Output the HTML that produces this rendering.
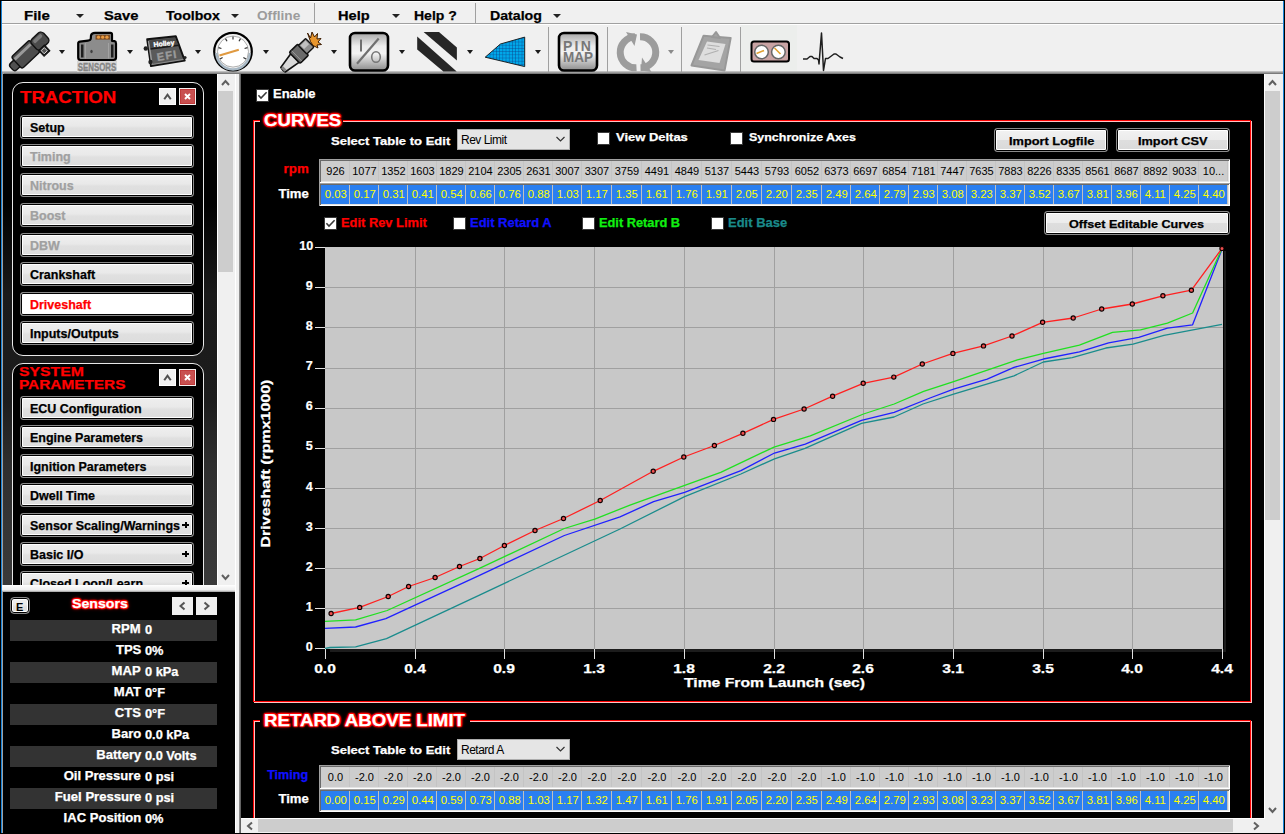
<!DOCTYPE html><html><head><meta charset='utf-8'><style>
*{box-sizing:border-box;margin:0;padding:0}
html,body{width:1285px;height:834px;overflow:hidden;background:#000;font-family:"Liberation Sans", sans-serif}
.a{position:absolute}
.t{position:absolute;white-space:nowrap;line-height:1}
.b{font-weight:bold}
.btn{position:absolute;border:1px solid #8a8a8a;border-radius:3px;background:linear-gradient(#f2f2f2 0%,#ececec 48%,#dedede 52%,#dadada 100%);box-shadow:inset 0 0 0 1px #000,inset 0 0 0 2px #fff}
.sbtn{position:absolute;border:1px solid #8a8a8a;border-radius:3px;background:linear-gradient(#efefef 0%,#e9e9e9 45%,#e0e0e0 55%,#dcdcdc 100%);box-shadow:inset 0 0 0 1px #000,inset 0 0 0 2px #fff}
.cb{position:absolute;width:12px;height:12px;background:#fff;border:1px solid #333}
</style></head><body>
<div class='a' style='left:1px;top:1px;width:1283px;height:72px;background:#f0f0f0'></div>
<div class='a' style='left:2px;top:1px;width:1281px;height:1px;background:#fff'></div>
<div class='a' style='left:2px;top:23px;width:1281px;height:1px;background:#a0a0a0'></div>
<div class='a' style='left:2px;top:24px;width:1281px;height:1px;background:#fff'></div>
<div class='a' style='left:2px;top:71px;width:1281px;height:3px;background:linear-gradient(#d0d0d0,#6a6a6a)'></div>
<div class='a' style='left:1px;top:1px;width:1px;height:832px;background:#1883d7'></div>
<div class='a' style='left:1283px;top:1px;width:1px;height:832px;background:#1883d7'></div>
<div class='t b' style='left:24px;top:9px;font-size:13px;color:#000;transform:scaleX(1.155);transform-origin:left top;-webkit-text-stroke:0.25px #000;'>File</div>
<div class='a' style='left:75.5px;top:13.7px;width:0;height:0;border-left:4.0px solid transparent;border-right:4.0px solid transparent;border-top:4px solid #222'></div>
<div class='t b' style='left:103.5px;top:9px;font-size:13px;color:#000;transform:scaleX(1.1321);transform-origin:left top;-webkit-text-stroke:0.25px #000;'>Save</div>
<div class='t b' style='left:166px;top:9px;font-size:13px;color:#000;transform:scaleX(1.0854);transform-origin:left top;-webkit-text-stroke:0.25px #000;'>Toolbox</div>
<div class='a' style='left:230.5px;top:13.7px;width:0;height:0;border-left:4.0px solid transparent;border-right:4.0px solid transparent;border-top:4px solid #222'></div>
<div class='t b' style='left:257px;top:9px;font-size:13px;color:#9c9c9c;transform:scaleX(1.05);transform-origin:left top;'>Offline</div>
<div class='a' style='left:314px;top:3px;width:1px;height:20px;background:#a0a0a0'></div>
<div class='t b' style='left:338.3px;top:9px;font-size:13px;color:#000;transform:scaleX(1.1231);transform-origin:left top;-webkit-text-stroke:0.25px #000;'>Help</div>
<div class='a' style='left:391.5px;top:13.7px;width:0;height:0;border-left:4.0px solid transparent;border-right:4.0px solid transparent;border-top:4px solid #222'></div>
<div class='t b' style='left:413.5px;top:9px;font-size:13px;color:#000;transform:scaleX(1.0784);transform-origin:left top;-webkit-text-stroke:0.25px #000;'>Help ?</div>
<div class='a' style='left:475px;top:3px;width:1px;height:20px;background:#a0a0a0'></div>
<div class='t b' style='left:489.5px;top:9px;font-size:13px;color:#000;transform:scaleX(1.0889);transform-origin:left top;-webkit-text-stroke:0.25px #000;'>Datalog</div>
<div class='a' style='left:552.5px;top:13.7px;width:0;height:0;border-left:4.0px solid transparent;border-right:4.0px solid transparent;border-top:4px solid #222'></div>
<div class='a' style='left:59.0px;top:50.0px;width:0;height:0;border-left:3.5px solid transparent;border-right:3.5px solid transparent;border-top:4px solid #1a1a1a'></div>
<div class='a' style='left:127.0px;top:50.0px;width:0;height:0;border-left:3.5px solid transparent;border-right:3.5px solid transparent;border-top:4px solid #1a1a1a'></div>
<div class='a' style='left:195.0px;top:50.0px;width:0;height:0;border-left:3.5px solid transparent;border-right:3.5px solid transparent;border-top:4px solid #1a1a1a'></div>
<div class='a' style='left:263.0px;top:50.0px;width:0;height:0;border-left:3.5px solid transparent;border-right:3.5px solid transparent;border-top:4px solid #1a1a1a'></div>
<div class='a' style='left:331.0px;top:50.0px;width:0;height:0;border-left:3.5px solid transparent;border-right:3.5px solid transparent;border-top:4px solid #1a1a1a'></div>
<div class='a' style='left:399.0px;top:50.0px;width:0;height:0;border-left:3.5px solid transparent;border-right:3.5px solid transparent;border-top:4px solid #1a1a1a'></div>
<div class='a' style='left:467.0px;top:50.0px;width:0;height:0;border-left:3.5px solid transparent;border-right:3.5px solid transparent;border-top:4px solid #1a1a1a'></div>
<div class='a' style='left:535.0px;top:50.0px;width:0;height:0;border-left:3.5px solid transparent;border-right:3.5px solid transparent;border-top:4px solid #1a1a1a'></div>
<div class='a' style='left:668.3px;top:50.0px;width:0;height:0;border-left:3.5px solid transparent;border-right:3.5px solid transparent;border-top:4px solid #8a8a8a'></div>
<div class='a' style='left:548px;top:27px;width:1px;height:45px;background:#a0a0a0'></div>
<div class='a' style='left:607px;top:27px;width:1px;height:45px;background:#a0a0a0'></div>
<div class='a' style='left:681px;top:27px;width:1px;height:45px;background:#a0a0a0'></div>
<div class='a' style='left:740px;top:27px;width:1px;height:45px;background:#a0a0a0'></div>
<div class='a' style='left:741px;top:25px;width:56px;height:46px;background:#eceeec'></div>
<svg class='a' style='left:0;top:0' width='1285' height='74'>
<defs>
<linearGradient id='gbox' x1='0' y1='0' x2='0' y2='1'><stop offset='0' stop-color='#a8a8a8'/><stop offset='0.35' stop-color='#ececec'/><stop offset='0.55' stop-color='#f2f2f2'/><stop offset='1' stop-color='#8c8c8c'/></linearGradient>
<linearGradient id='gbody' x1='0' y1='0' x2='0' y2='1'><stop offset='0' stop-color='#9a9a9a'/><stop offset='0.3' stop-color='#5a5a5a'/><stop offset='1' stop-color='#3a3a3a'/></linearGradient>
<pattern id='grid' width='3.2' height='3.2' patternUnits='userSpaceOnUse'><rect width='3.2' height='3.2' fill='#00a8ea'/><path d='M0 0H3.2M0 0V3.2' stroke='#0a4a90' stroke-width='0.9'/></pattern>
</defs>
<g transform='translate(29,52) rotate(-43.3)'>
<rect x='-24' y='-4.5' width='10' height='9' rx='3' fill='#505050' stroke='#111' stroke-width='1.4'/>
<rect x='-16.5' y='-8.5' width='25' height='16' rx='2.5' fill='#4c4c4c' stroke='#111' stroke-width='1.4'/>
<rect x='-15.5' y='-6' width='22' height='3' fill='#9a9a9a'/>
<rect x='7.5' y='-7.5' width='16' height='14' rx='4' fill='#4a4a4a' stroke='#111' stroke-width='1.4'/>
<rect x='10' y='-5.5' width='11' height='3.5' rx='1.5' fill='#7a7a7a'/>
<rect x='8' y='5.5' width='8' height='8' fill='#1a1a1a' stroke='#111' stroke-width='1'/>
<rect x='9.8' y='7.3' width='4.4' height='4.4' fill='#555' stroke='#e0e0e0' stroke-width='0.9'/>
</g>
<rect x='77' y='60.5' width='40' height='11.5' fill='#d6d6d6'/>
<text x='97' y='71.3' font-family='Liberation Sans' font-weight='bold' font-size='10.5' fill='#858585' stroke='#858585' stroke-width='0.35' text-anchor='middle' textLength='38.5' lengthAdjust='spacingAndGlyphs'>SENSORS</text>
<path d='M78.2 43.5 Q78.2 41.8 80 41.6 L88 40.6 Q90.6 40.4 90.8 38.5 L91 35.5 Q91.5 32.8 95 32.8 L110.5 32.8 Q112 32.8 112 34.5 L112 40.8 L114.5 41.2 Q116 41.5 116 43.5 L116 57.5 Q116 60 113.5 60 L80.5 60 Q78.2 60 78.2 57.5 Z' fill='#8c8c8c' stroke='#000' stroke-width='2.2' stroke-linejoin='round'/>
<rect x='95.5' y='34.8' width='14.5' height='4.8' fill='#7a4a20'/>
<circle cx='98.5' cy='37.2' r='1.6' fill='#e89a40'/><circle cx='102.7' cy='37.2' r='1.6' fill='#e89a40'/><circle cx='106.9' cy='37.2' r='1.6' fill='#e89a40'/>
<rect x='81' y='44.5' width='2.5' height='13' fill='#1e1e1e'/><rect x='111' y='44.5' width='2.5' height='13' fill='#1e1e1e'/>
<line x1='85.5' y1='43' x2='85.5' y2='58.5' stroke='#a8a8a8' stroke-width='0.8'/><line x1='108.5' y1='43' x2='108.5' y2='58.5' stroke='#a8a8a8' stroke-width='0.8'/>
<ellipse cx='91.5' cy='51.5' rx='1.2' ry='1.8' fill='#404040'/>
<path d='M147.2 39.3 L175.8 36.3 L184.7 60.5 L151 66 Z' fill='#5a5a5a' stroke='#111' stroke-width='2' stroke-linejoin='round'/>
<path d='M148.6 41 L152 64.5' stroke='#9a9a9a' stroke-width='1.6'/>
<path d='M149 40.5 L175 37.8 L178.5 45 L150.5 48.5 Z' fill='#484848'/>
<path d='M150.5 49 L179 45.3' stroke='#1a1a1a' stroke-width='1.6'/>
<text x='164' y='46' font-family='Liberation Sans' font-weight='bold' font-size='7' fill='#fff' stroke='#fff' stroke-width='0.3' transform='rotate(-6 164 45)' text-anchor='middle'>Holley</text>
<text x='167' y='59.5' font-family='Liberation Sans' font-weight='bold' font-size='11' fill='#9a9a9a' stroke='#9a9a9a' stroke-width='0.4' transform='rotate(-9 166 55)' text-anchor='middle' letter-spacing='1.2'>EFI</text>
<path d='M152 64.5 L183.5 59.3' stroke='#8a8a8a' stroke-width='1.2'/>
<circle cx='145.8' cy='48.5' r='2.2' fill='#222'/><circle cx='150.5' cy='62' r='2.2' fill='#222'/><circle cx='185' cy='57.5' r='1.6' fill='#222'/>
<circle cx='233' cy='51.6' r='18.8' fill='#f4f4f4' stroke='#000' stroke-width='2.2'/>
<path d='M216.5 53 A16.5 16.5 0 0 0 249.5 53' fill='none' stroke='#a8b8c4' stroke-width='2.5'/>
<circle cx='233' cy='51.6' r='15.5' fill='#fff' stroke='#999' stroke-width='0.8'/>
<line x1='220.0' y1='59.1' x2='222.6' y2='57.6' stroke='#333' stroke-width='1.2'/><line x1='218.5' y1='47.7' x2='221.4' y2='48.5' stroke='#333' stroke-width='1.2'/><line x1='225.5' y1='38.6' x2='227.0' y2='41.2' stroke='#333' stroke-width='1.2'/><line x1='233.0' y1='36.6' x2='233.0' y2='39.6' stroke='#333' stroke-width='1.2'/><line x1='240.5' y1='38.6' x2='239.0' y2='41.2' stroke='#333' stroke-width='1.2'/><line x1='247.5' y1='47.7' x2='244.6' y2='48.5' stroke='#333' stroke-width='1.2'/><line x1='246.0' y1='59.1' x2='243.4' y2='57.6' stroke='#333' stroke-width='1.2'/>
<line x1='219.5' y1='55.5' x2='238.8' y2='49.8' stroke='#e09a40' stroke-width='2.2'/>
<g transform='translate(298,55) rotate(-44.5)'>
<path d='M-21 -3.2 Q-22 0 -21 3.2 L-4 6 L-4 -6 Z' fill='#dadada' stroke='#111' stroke-width='1.6' stroke-linejoin='round'/>
<rect x='-21.5' y='-2.5' width='3' height='5' fill='#888'/>
<rect x='-4.5' y='-8' width='12' height='15.5' rx='1.5' fill='#6a6a6a' stroke='#111' stroke-width='1.6'/>
<line x1='-1.5' y1='-7.5' x2='-1.5' y2='7' stroke='#a0a0a0' stroke-width='0.8'/>
<rect x='7' y='-6.5' width='10' height='12' rx='1' fill='#8e8e8e' stroke='#111' stroke-width='1.4'/>
<rect x='8.5' y='-5' width='7' height='5' fill='#c0c0c0'/>
</g>
<path d='M307.5 33 L310.5 38 L312 32 L314.5 37 L317.5 33.5 L317 39 L321 38.5 L318 42 L321.5 44.5 L317 45 L318 48 L313 45.5 L310.5 41.5 Z' fill='#e8962e' stroke='#3a1a00' stroke-width='1' stroke-linejoin='round'/>
<rect x='350' y='33' width='38' height='37.5' rx='5' fill='url(#gbox)' stroke='#000' stroke-width='2.6'/>
<rect x='360' y='39.5' width='2' height='12' fill='#707070'/>
<line x1='357' y1='63.8' x2='378.7' y2='38.5' stroke='#707070' stroke-width='2.2'/>
<ellipse cx='376' cy='57' rx='4.3' ry='5.3' fill='none' stroke='#777' stroke-width='1.6'/>
<path d='M423.6 32.1 L439 32.1 L456.9 47.6 L456.9 60.5 Z' fill='#262626'/>
<path d='M417.2 36.5 L417.2 49.5 L443.4 71.5 L456.7 71.5 Z' fill='#262626'/>
<path d='M485.2 57.2 L500.4 44 L524.7 37.1 L524.7 66.6 Z' fill='url(#grid)' stroke='#111' stroke-width='0.9' stroke-linejoin='round'/>
<rect x='559' y='33' width='38' height='37.5' rx='5' fill='url(#gbox)' stroke='#000' stroke-width='2.6'/>
<text x='578' y='50.5' font-family='Liberation Sans' font-weight='bold' font-size='14' fill='#777' text-anchor='middle' letter-spacing='2.2'>PIN</text>
<text x='578' y='62' font-family='Liberation Sans' font-weight='bold' font-size='14' fill='#777' text-anchor='middle' textLength='30' lengthAdjust='spacingAndGlyphs'>MAP</text>
<path d='M636.5 67.8 A15.5 15.5 0 0 1 635 36.8' fill='none' stroke='#9c9c9c' stroke-width='7'/>
<path d='M640 36.8 A15.5 15.5 0 0 1 640.5 67.8' fill='none' stroke='#9c9c9c' stroke-width='7'/>
<path d='M626 32 L637 34.5 L634.5 46 Z' fill='#9c9c9c'/>
<path d='M642 57.5 L641 70.5 L651.5 72 Z' fill='#9c9c9c'/>
<path d='M703.6 35.7 L730.7 37.9 L724.6 70.4 L691.5 65.5 Z' fill='#a4a4a4' stroke='#989898' stroke-width='2' stroke-linejoin='round'/>
<path d='M712 37 L716 32 L720 38 Z' fill='#a4a4a4' stroke='#989898' stroke-width='2' stroke-linejoin='round'/>
<path d='M707 41.5 L725.5 44 L719.5 63 L698.5 60 Z' fill='#dedede'/>
<path d='M707.5 45 L719.5 46.5 M707 48 L716 49.5 M704.5 55 L718.5 50.5' stroke='#b0b0b0' stroke-width='1.2'/>
<rect x='751.5' y='41.5' width='37.5' height='20' rx='2.5' fill='#c9a3a3' stroke='#000' stroke-width='2'/>
<circle cx='761.5' cy='52' r='6.8' fill='#fff' stroke='#666' stroke-width='1.5'/>
<circle cx='778.4' cy='52' r='6.8' fill='#fff' stroke='#666' stroke-width='1.5'/>
<line x1='756.5' y1='53.5' x2='764' y2='50.5' stroke='#e0a030' stroke-width='1.6'/>
<line x1='774.5' y1='48' x2='780.5' y2='54' stroke='#e0a030' stroke-width='1.6'/>
<polyline points='803,59 807,59 810,56.5 812,56.5 814,58.5 817,58.5 818.5,60 819,64 821.5,33 823.5,70.5 825.5,58.5 828,58.5 834,54 836,54 840,57 843,58.5' fill='none' stroke='#1e1e1e' stroke-width='1.5' stroke-linejoin='round'/>
</svg>
<div class='a' style='left:2px;top:73px;width:2px;height:760px;background:#a0a0a0'></div>
<div class='a' style='left:3px;top:74px;width:214px;height:511px;background:linear-gradient(#000 0px,#000 130px,#1a1a1a 220px,#1c1c1c 326px,#2e2e2e 390px,#353535 450px,#3a3a3a 511px)'></div>
<div class='a' style='left:217px;top:74px;width:1px;height:511px;background:#fff'></div>
<div class='a' style='left:218px;top:74px;width:17px;height:511px;background:#f0f0f0'></div>
<div class='a' style='left:218px;top:91px;width:15px;height:181px;background:#cdcdcd'></div>
<div class='a' style='left:235px;top:74px;width:1px;height:759px;background:#fff'></div>
<div class='a' style='left:236px;top:74px;width:3px;height:759px;background:#f0f0f0'></div>
<div class='a' style='left:239px;top:74px;width:2px;height:759px;background:linear-gradient(90deg,#a0a0a0,#505050)'></div>
<svg class='a' style='left:0;top:0' width='1285' height='834'><polyline points='222.0,85.0 225.5,81.0 229.0,85.0' fill='none' stroke='#606060' stroke-width='2'/><polyline points='222.0,575.0 225.5,579.0 229.0,575.0' fill='none' stroke='#606060' stroke-width='2'/></svg>
<div class='a' style='left:12px;top:82px;width:192px;height:274px;border:1px solid #e8e8e8;border-radius:11px;background:#000'></div>
<div class='a' style='left:12px;top:363px;width:192px;height:240px;border:1px solid #e8e8e8;border-radius:11px;background:#000'></div>
<div class='t b' style='left:20.4px;top:89px;font-size:17px;color:#ff0000;transform:scaleX(1.0965);transform-origin:left top;-webkit-text-stroke:0.25px #ff0000;'>TRACTION</div>
<div class='t b' style='left:18.8px;top:365px;font-size:13px;color:#ff0000;transform:scaleX(1.2118);transform-origin:left top;-webkit-text-stroke:0.25px #ff0000;'>SYSTEM</div>
<div class='t b' style='left:18.8px;top:378px;font-size:13px;color:#ff0000;transform:scaleX(1.1818);transform-origin:left top;-webkit-text-stroke:0.25px #ff0000;'>PARAMETERS</div>
<div class='a' style='left:159px;top:88px;width:17px;height:17px;background:#f0f0f0;border:1px solid #fff'></div>
<div class='a' style='left:179px;top:88px;width:17px;height:17px;background:#c85050;border:1px solid #f4f0f0;box-shadow:inset 0 0 0 1px #c03a3a'></div>
<svg class='a' style='left:0;top:0' width='240' height='834'><polyline points='164.25,99.25 167.5,94.75 170.75,99.25' fill='none' stroke='#505050' stroke-width='2'/><path d='M185 94 L190 99 M190 94 L185 99' stroke='#fff' stroke-width='1.9'/></svg>
<div class='a' style='left:159px;top:369px;width:17px;height:17px;background:#f0f0f0;border:1px solid #fff'></div>
<div class='a' style='left:179px;top:369px;width:17px;height:17px;background:#c85050;border:1px solid #f4f0f0;box-shadow:inset 0 0 0 1px #c03a3a'></div>
<svg class='a' style='left:0;top:0' width='240' height='834'><polyline points='164.25,380.25 167.5,375.75 170.75,380.25' fill='none' stroke='#505050' stroke-width='2'/><path d='M185 375 L190 380 M190 375 L185 380' stroke='#fff' stroke-width='1.9'/></svg>
<div class='sbtn' style='left:20px;top:115px;width:174px;height:24px'></div>
<div class='t b' style='left:29.6px;top:122px;font-size:12px;color:#000;transform:scaleX(1.04);transform-origin:left top;-webkit-text-stroke:0.25px #000;'>Setup</div>
<div class='sbtn' style='left:20px;top:144px;width:174px;height:24px'></div>
<div class='t b' style='left:29.6px;top:151px;font-size:12px;color:#a0a0a0;transform:scaleX(1.04);transform-origin:left top;-webkit-text-stroke:0.25px #a0a0a0;'>Timing</div>
<div class='sbtn' style='left:20px;top:173px;width:174px;height:24px'></div>
<div class='t b' style='left:29.6px;top:180px;font-size:12px;color:#a0a0a0;transform:scaleX(1.04);transform-origin:left top;-webkit-text-stroke:0.25px #a0a0a0;'>Nitrous</div>
<div class='sbtn' style='left:20px;top:203px;width:174px;height:24px'></div>
<div class='t b' style='left:29.6px;top:210px;font-size:12px;color:#a0a0a0;transform:scaleX(1.04);transform-origin:left top;-webkit-text-stroke:0.25px #a0a0a0;'>Boost</div>
<div class='sbtn' style='left:20px;top:233px;width:174px;height:24px'></div>
<div class='t b' style='left:29.6px;top:240px;font-size:12px;color:#a0a0a0;transform:scaleX(1.04);transform-origin:left top;-webkit-text-stroke:0.25px #a0a0a0;'>DBW</div>
<div class='sbtn' style='left:20px;top:262px;width:174px;height:24px'></div>
<div class='t b' style='left:29.6px;top:269px;font-size:12px;color:#000;transform:scaleX(1.04);transform-origin:left top;-webkit-text-stroke:0.25px #000;'>Crankshaft</div>
<div class='sbtn' style='left:20px;top:292px;width:174px;height:24px;background:#fff'></div>
<div class='t b' style='left:29.6px;top:299px;font-size:12px;color:#ff0000;transform:scaleX(1.04);transform-origin:left top;-webkit-text-stroke:0.25px #ff0000;'>Driveshaft</div>
<div class='sbtn' style='left:20px;top:321px;width:174px;height:24px'></div>
<div class='t b' style='left:29.6px;top:328px;font-size:12px;color:#000;transform:scaleX(1.04);transform-origin:left top;-webkit-text-stroke:0.25px #000;'>Inputs/Outputs</div>
<div class='a' style='left:0;top:74px;width:217px;height:511px;overflow:hidden'><div class='a' style='left:0;top:-74px;width:217px;height:834px'>
<div class='sbtn' style='left:20px;top:396px;width:174px;height:24px'></div>
<div class='t b' style='left:29.6px;top:403px;font-size:12px;color:#000;transform:scaleX(1.04);transform-origin:left top;-webkit-text-stroke:0.25px #000;'>ECU Configuration</div>
<div class='sbtn' style='left:20px;top:425px;width:174px;height:24px'></div>
<div class='t b' style='left:29.6px;top:432px;font-size:12px;color:#000;transform:scaleX(1.04);transform-origin:left top;-webkit-text-stroke:0.25px #000;'>Engine Parameters</div>
<div class='sbtn' style='left:20px;top:454px;width:174px;height:24px'></div>
<div class='t b' style='left:29.6px;top:461px;font-size:12px;color:#000;transform:scaleX(1.04);transform-origin:left top;-webkit-text-stroke:0.25px #000;'>Ignition Parameters</div>
<div class='sbtn' style='left:20px;top:483px;width:174px;height:24px'></div>
<div class='t b' style='left:29.6px;top:490px;font-size:12px;color:#000;transform:scaleX(1.04);transform-origin:left top;-webkit-text-stroke:0.25px #000;'>Dwell Time</div>
<div class='sbtn' style='left:20px;top:513px;width:174px;height:24px'></div>
<div class='t b' style='left:29.6px;top:520px;font-size:12px;color:#000;transform:scaleX(1.04);transform-origin:left top;-webkit-text-stroke:0.25px #000;'>Sensor Scaling/Warnings</div>
<div class='a' style='left:182px;top:524px;width:7px;height:2px;background:#000'></div><div class='a' style='left:184.5px;top:522px;width:2px;height:6px;background:#000'></div>
<div class='sbtn' style='left:20px;top:542px;width:174px;height:24px'></div>
<div class='t b' style='left:29.6px;top:549px;font-size:12px;color:#000;transform:scaleX(1.04);transform-origin:left top;-webkit-text-stroke:0.25px #000;'>Basic I/O</div>
<div class='a' style='left:182px;top:553px;width:7px;height:2px;background:#000'></div><div class='a' style='left:184.5px;top:551px;width:2px;height:6px;background:#000'></div>
<div class='sbtn' style='left:20px;top:571px;width:174px;height:24px'></div>
<div class='t b' style='left:29.6px;top:578px;font-size:12px;color:#000;transform:scaleX(1.04);transform-origin:left top;-webkit-text-stroke:0.25px #000;'>Closed Loop/Learn</div>
<div class='a' style='left:182px;top:582px;width:7px;height:2px;background:#000'></div><div class='a' style='left:184.5px;top:580px;width:2px;height:6px;background:#000'></div>
</div></div>
<div class='a' style='left:2px;top:585px;width:233px;height:7px;background:linear-gradient(#fff 0,#f4f4f4 3px,#f0f0f0 5px,#9a9a9a 7px)'></div>
<div class='a' style='left:3px;top:592px;width:232px;height:241px;background:#000'></div>
<div class='sbtn' style='left:10px;top:597px;width:20px;height:17px;border-radius:4px'></div>
<div class='t b' style='left:16px;top:602px;font-size:11px;color:#000'>E</div>
<div class='t b' style='left:72px;top:597px;font-size:13px;color:#fff;transform:scaleX(1.088);transform-origin:left top;-webkit-text-stroke:0.25px #fff;text-shadow:1px 0 1px #f00,-1px 0 1px #f00,0 1px 1px #f00,0 -1px 1px #f00,1px 1px 1px #f00,-1px -1px 1px #f00,1px -1px 1px #f00,-1px 1px 1px #f00,0 0 3px #f00,0 0 4px #d00'>Sensors</div>
<div class='a' style='left:172px;top:597px;width:21px;height:18px;background:#f0f0f0'></div>
<div class='a' style='left:196px;top:597px;width:21px;height:18px;background:#f0f0f0'></div>
<svg class='a' style='left:0;top:0' width='240' height='834'><polyline points='184.5,602.5 180.5,606 184.5,609.5' fill='none' stroke='#555' stroke-width='2'/><polyline points='204.5,602.5 208.5,606 204.5,609.5' fill='none' stroke='#555' stroke-width='2'/></svg>
<div class='a' style='left:10px;top:620px;width:207px;height:21px;background:#333'></div>
<div class='t b' style='right:1144px;top:623px;font-size:12px;color:#fff;transform:scaleX(1.09);transform-origin:right top;-webkit-text-stroke:0.25px #fff;'>RPM</div>
<div class='t b' style='left:145px;top:624px;font-size:12px;color:#fff;transform:scaleX(1.065);transform-origin:left top;-webkit-text-stroke:0.25px #fff;'>0</div>
<div class='t b' style='right:1144px;top:644px;font-size:12px;color:#fff;transform:scaleX(1.09);transform-origin:right top;-webkit-text-stroke:0.25px #fff;'>TPS</div>
<div class='t b' style='left:145px;top:645px;font-size:12px;color:#fff;transform:scaleX(1.065);transform-origin:left top;-webkit-text-stroke:0.25px #fff;'>0%</div>
<div class='a' style='left:10px;top:662px;width:207px;height:21px;background:#333'></div>
<div class='t b' style='right:1144px;top:665px;font-size:12px;color:#fff;transform:scaleX(1.09);transform-origin:right top;-webkit-text-stroke:0.25px #fff;'>MAP</div>
<div class='t b' style='left:145px;top:666px;font-size:12px;color:#fff;transform:scaleX(1.065);transform-origin:left top;-webkit-text-stroke:0.25px #fff;'>0 kPa</div>
<div class='t b' style='right:1144px;top:686px;font-size:12px;color:#fff;transform:scaleX(1.09);transform-origin:right top;-webkit-text-stroke:0.25px #fff;'>MAT</div>
<div class='t b' style='left:145px;top:687px;font-size:12px;color:#fff;transform:scaleX(1.065);transform-origin:left top;-webkit-text-stroke:0.25px #fff;'>0°F</div>
<div class='a' style='left:10px;top:704px;width:207px;height:21px;background:#333'></div>
<div class='t b' style='right:1144px;top:707px;font-size:12px;color:#fff;transform:scaleX(1.09);transform-origin:right top;-webkit-text-stroke:0.25px #fff;'>CTS</div>
<div class='t b' style='left:145px;top:708px;font-size:12px;color:#fff;transform:scaleX(1.065);transform-origin:left top;-webkit-text-stroke:0.25px #fff;'>0°F</div>
<div class='t b' style='right:1144px;top:728px;font-size:12px;color:#fff;transform:scaleX(1.09);transform-origin:right top;-webkit-text-stroke:0.25px #fff;'>Baro</div>
<div class='t b' style='left:145px;top:729px;font-size:12px;color:#fff;transform:scaleX(1.065);transform-origin:left top;-webkit-text-stroke:0.25px #fff;'>0.0 kPa</div>
<div class='a' style='left:10px;top:746px;width:207px;height:21px;background:#333'></div>
<div class='t b' style='right:1144px;top:749px;font-size:12px;color:#fff;transform:scaleX(1.09);transform-origin:right top;-webkit-text-stroke:0.25px #fff;'>Battery</div>
<div class='t b' style='left:145px;top:750px;font-size:12px;color:#fff;transform:scaleX(1.065);transform-origin:left top;-webkit-text-stroke:0.25px #fff;'>0.0 Volts</div>
<div class='t b' style='right:1144px;top:770px;font-size:12px;color:#fff;transform:scaleX(1.09);transform-origin:right top;-webkit-text-stroke:0.25px #fff;'>Oil Pressure</div>
<div class='t b' style='left:145px;top:771px;font-size:12px;color:#fff;transform:scaleX(1.065);transform-origin:left top;-webkit-text-stroke:0.25px #fff;'>0 psi</div>
<div class='a' style='left:10px;top:788px;width:207px;height:21px;background:#333'></div>
<div class='t b' style='right:1144px;top:791px;font-size:12px;color:#fff;transform:scaleX(1.09);transform-origin:right top;-webkit-text-stroke:0.25px #fff;'>Fuel Pressure</div>
<div class='t b' style='left:145px;top:792px;font-size:12px;color:#fff;transform:scaleX(1.065);transform-origin:left top;-webkit-text-stroke:0.25px #fff;'>0 psi</div>
<div class='t b' style='right:1144px;top:812px;font-size:12px;color:#fff;transform:scaleX(1.09);transform-origin:right top;-webkit-text-stroke:0.25px #fff;'>IAC Position</div>
<div class='t b' style='left:145px;top:813px;font-size:12px;color:#fff;transform:scaleX(1.065);transform-origin:left top;-webkit-text-stroke:0.25px #fff;'>0%</div>
<div class='a' style='left:1264px;top:74px;width:1px;height:745px;background:#fff'></div>
<div class='a' style='left:1265px;top:74px;width:18px;height:759px;background:#f0f0f0'></div>
<div class='a' style='left:1265px;top:91px;width:15px;height:429px;background:#cdcdcd'></div>
<div class='a' style='left:241px;top:818px;width:1024px;height:1px;background:#fff'></div>
<div class='a' style='left:241px;top:819px;width:1024px;height:14px;background:#f0f0f0'></div>
<div class='a' style='left:258px;top:819px;width:975px;height:13px;background:#cdcdcd'></div>
<svg class='a' style='left:0;top:0' width='1285' height='834'><polyline points='1269.0,85.0 1272.5,81.0 1276.0,85.0' fill='none' stroke='#606060' stroke-width='2'/><polyline points='1269.0,808.0 1272.5,812.0 1276.0,808.0' fill='none' stroke='#606060' stroke-width='2'/><polyline points='252.0,822.5 248.0,826 252.0,829.5' fill='none' stroke='#606060' stroke-width='2'/><polyline points='1254.0,822.5 1258.0,826 1254.0,829.5' fill='none' stroke='#606060' stroke-width='2'/></svg>
<div class='a' style='left:256px;top:89px;width:13px;height:13px;background:#fff;border:1px solid #3a3a3a'></div><svg class='a' style='left:256px;top:89px' width='13' height='13'><polyline points='2.4,6.3 5,9 10.6,3.3' fill='none' stroke='#3a3a3a' stroke-width='1.6'/></svg>
<div class='t b' style='left:273px;top:88px;font-size:12px;color:#fff;transform:scaleX(1.0811);transform-origin:left top;-webkit-text-stroke:0.25px #fff;'>Enable</div>
<div class='a' style='left:254px;top:121px;width:998px;height:582px;border:1px solid #ffc4c4'></div>
<div class='a' style='left:253px;top:120px;width:998px;height:582px;border:1px solid #ff0000'></div>
<div class='a' style='left:259.6px;top:115px;width:83px;height:12px;background:#000'></div>
<div class='t b' style='left:263.6px;top:113px;font-size:16px;color:#fff;transform:scaleX(1.1641);transform-origin:left top;-webkit-text-stroke:0.25px #fff;text-shadow:1px 0 1px #f00,-1px 0 1px #f00,0 1px 1px #f00,0 -1px 1px #f00,1px 1px 1px #f00,-1px -1px 1px #f00,1px -1px 1px #f00,-1px 1px 1px #f00,0 0 3px #f00,0 0 4px #d00'>CURVES</div>
<div class='a' style='left:254px;top:721px;width:998px;height:120px;border:1px solid #ffc4c4'></div>
<div class='a' style='left:253px;top:720px;width:998px;height:120px;border:1px solid #ff0000'></div>
<div class='a' style='left:259.6px;top:715px;width:210px;height:12px;background:#000'></div>
<div class='t b' style='left:263.6px;top:713px;font-size:16px;color:#fff;transform:scaleX(1.1655);transform-origin:left top;-webkit-text-stroke:0.25px #fff;text-shadow:1px 0 1px #f00,-1px 0 1px #f00,0 1px 1px #f00,0 -1px 1px #f00,1px 1px 1px #f00,-1px -1px 1px #f00,1px -1px 1px #f00,-1px 1px 1px #f00,0 0 3px #f00,0 0 4px #d00'>RETARD ABOVE LIMIT</div>
<div class='t b' style='left:330.5px;top:136px;font-size:11px;color:#fff;transform:scaleX(1.185);transform-origin:left top;-webkit-text-stroke:0.25px #fff;'>Select Table to Edit</div>
<div class='a' style='left:457px;top:129px;width:113px;height:21px;background:#e5e5e5;border:1px solid #adadad'></div>
<div class='t' style='left:461px;top:134px;font-size:12px;color:#000;letter-spacing:-0.5px;'>Rev Limit</div>
<svg class='a' style='left:556px;top:136px' width='10' height='8'><polyline points='0.5,1 4.5,5 8.5,1' fill='none' stroke='#333' stroke-width='1.2'/></svg>
<div class='a' style='left:597px;top:132px;width:13px;height:13px;background:#fff;border:1px solid #3a3a3a'></div>
<div class='t b' style='left:615.5px;top:132px;font-size:11px;color:#fff;transform:scaleX(1.1783);transform-origin:left top;-webkit-text-stroke:0.25px #fff;'>View Deltas</div>
<div class='a' style='left:730px;top:132px;width:13px;height:13px;background:#fff;border:1px solid #3a3a3a'></div>
<div class='t b' style='left:748.6px;top:132px;font-size:11px;color:#fff;transform:scaleX(1.1323);transform-origin:left top;-webkit-text-stroke:0.25px #fff;'>Synchronize Axes</div>
<div class='btn' style='left:994px;top:128px;width:114px;height:24px'></div>
<div class='t b' style='left:1008.5px;top:136px;font-size:11px;color:#000;transform:scaleX(1.1634);transform-origin:left top;-webkit-text-stroke:0.25px #000;'>Import Logfile</div>
<div class='btn' style='left:1116px;top:128px;width:114px;height:24px'></div>
<div class='t b' style='left:1137.6px;top:136px;font-size:11px;color:#000;transform:scaleX(1.1586);transform-origin:left top;-webkit-text-stroke:0.25px #000;'>Import CSV</div>
<div class='a' style='left:319px;top:159px;width:911px;height:24px;background:#fff;border-top:1px solid #a0a0a0;border-left:1px solid #a0a0a0'></div>
<div class='a' style='left:320px;top:160px;width:909px;height:22px;background:#e3e3e3;border-top:1px solid #696969;border-left:1px solid #696969'></div>
<div class='t' style='left:321px;top:161px;width:29px;height:20px;background:#cdcdcd;border-right:1px solid #c4c4c4;font-size:11px;color:#000;text-align:center;line-height:20px;padding-left:1px;letter-spacing:0'><span style='display:inline-block;transform:scaleX(1.0)'>926</span></div>
<div class='t' style='left:350px;top:161px;width:29px;height:20px;background:#cdcdcd;border-right:1px solid #c4c4c4;font-size:11px;color:#000;text-align:center;line-height:20px;padding-left:1px;letter-spacing:0'><span style='display:inline-block;transform:scaleX(1.0)'>1077</span></div>
<div class='t' style='left:379px;top:161px;width:29px;height:20px;background:#cdcdcd;border-right:1px solid #c4c4c4;font-size:11px;color:#000;text-align:center;line-height:20px;padding-left:1px;letter-spacing:0'><span style='display:inline-block;transform:scaleX(1.0)'>1352</span></div>
<div class='t' style='left:408px;top:161px;width:29px;height:20px;background:#cdcdcd;border-right:1px solid #c4c4c4;font-size:11px;color:#000;text-align:center;line-height:20px;padding-left:1px;letter-spacing:0'><span style='display:inline-block;transform:scaleX(1.0)'>1603</span></div>
<div class='t' style='left:437px;top:161px;width:29px;height:20px;background:#cdcdcd;border-right:1px solid #c4c4c4;font-size:11px;color:#000;text-align:center;line-height:20px;padding-left:1px;letter-spacing:0'><span style='display:inline-block;transform:scaleX(1.0)'>1829</span></div>
<div class='t' style='left:466px;top:161px;width:29px;height:20px;background:#cdcdcd;border-right:1px solid #c4c4c4;font-size:11px;color:#000;text-align:center;line-height:20px;padding-left:1px;letter-spacing:0'><span style='display:inline-block;transform:scaleX(1.0)'>2104</span></div>
<div class='t' style='left:495px;top:161px;width:29px;height:20px;background:#cdcdcd;border-right:1px solid #c4c4c4;font-size:11px;color:#000;text-align:center;line-height:20px;padding-left:1px;letter-spacing:0'><span style='display:inline-block;transform:scaleX(1.0)'>2305</span></div>
<div class='t' style='left:524px;top:161px;width:29px;height:20px;background:#cdcdcd;border-right:1px solid #c4c4c4;font-size:11px;color:#000;text-align:center;line-height:20px;padding-left:1px;letter-spacing:0'><span style='display:inline-block;transform:scaleX(1.0)'>2631</span></div>
<div class='t' style='left:553px;top:161px;width:29px;height:20px;background:#cdcdcd;border-right:1px solid #c4c4c4;font-size:11px;color:#000;text-align:center;line-height:20px;padding-left:1px;letter-spacing:0'><span style='display:inline-block;transform:scaleX(1.0)'>3007</span></div>
<div class='t' style='left:582px;top:161px;width:30px;height:20px;background:#cdcdcd;border-right:1px solid #c4c4c4;font-size:11px;color:#000;text-align:center;line-height:20px;padding-left:1px;letter-spacing:0'><span style='display:inline-block;transform:scaleX(1.0)'>3307</span></div>
<div class='t' style='left:612px;top:161px;width:30px;height:20px;background:#cdcdcd;border-right:1px solid #c4c4c4;font-size:11px;color:#000;text-align:center;line-height:20px;padding-left:1px;letter-spacing:0'><span style='display:inline-block;transform:scaleX(1.0)'>3759</span></div>
<div class='t' style='left:642px;top:161px;width:30px;height:20px;background:#cdcdcd;border-right:1px solid #c4c4c4;font-size:11px;color:#000;text-align:center;line-height:20px;padding-left:1px;letter-spacing:0'><span style='display:inline-block;transform:scaleX(1.0)'>4491</span></div>
<div class='t' style='left:672px;top:161px;width:30px;height:20px;background:#cdcdcd;border-right:1px solid #c4c4c4;font-size:11px;color:#000;text-align:center;line-height:20px;padding-left:1px;letter-spacing:0'><span style='display:inline-block;transform:scaleX(1.0)'>4849</span></div>
<div class='t' style='left:702px;top:161px;width:30px;height:20px;background:#cdcdcd;border-right:1px solid #c4c4c4;font-size:11px;color:#000;text-align:center;line-height:20px;padding-left:1px;letter-spacing:0'><span style='display:inline-block;transform:scaleX(1.0)'>5137</span></div>
<div class='t' style='left:732px;top:161px;width:30px;height:20px;background:#cdcdcd;border-right:1px solid #c4c4c4;font-size:11px;color:#000;text-align:center;line-height:20px;padding-left:1px;letter-spacing:0'><span style='display:inline-block;transform:scaleX(1.0)'>5443</span></div>
<div class='t' style='left:762px;top:161px;width:30px;height:20px;background:#cdcdcd;border-right:1px solid #c4c4c4;font-size:11px;color:#000;text-align:center;line-height:20px;padding-left:1px;letter-spacing:0'><span style='display:inline-block;transform:scaleX(1.0)'>5793</span></div>
<div class='t' style='left:792px;top:161px;width:30px;height:20px;background:#cdcdcd;border-right:1px solid #c4c4c4;font-size:11px;color:#000;text-align:center;line-height:20px;padding-left:1px;letter-spacing:0'><span style='display:inline-block;transform:scaleX(1.0)'>6052</span></div>
<div class='t' style='left:822px;top:161px;width:29px;height:20px;background:#cdcdcd;border-right:1px solid #c4c4c4;font-size:11px;color:#000;text-align:center;line-height:20px;padding-left:1px;letter-spacing:0'><span style='display:inline-block;transform:scaleX(1.0)'>6373</span></div>
<div class='t' style='left:851px;top:161px;width:29px;height:20px;background:#cdcdcd;border-right:1px solid #c4c4c4;font-size:11px;color:#000;text-align:center;line-height:20px;padding-left:1px;letter-spacing:0'><span style='display:inline-block;transform:scaleX(1.0)'>6697</span></div>
<div class='t' style='left:880px;top:161px;width:29px;height:20px;background:#cdcdcd;border-right:1px solid #c4c4c4;font-size:11px;color:#000;text-align:center;line-height:20px;padding-left:1px;letter-spacing:0'><span style='display:inline-block;transform:scaleX(1.0)'>6854</span></div>
<div class='t' style='left:909px;top:161px;width:29px;height:20px;background:#cdcdcd;border-right:1px solid #c4c4c4;font-size:11px;color:#000;text-align:center;line-height:20px;padding-left:1px;letter-spacing:0'><span style='display:inline-block;transform:scaleX(1.0)'>7181</span></div>
<div class='t' style='left:938px;top:161px;width:29px;height:20px;background:#cdcdcd;border-right:1px solid #c4c4c4;font-size:11px;color:#000;text-align:center;line-height:20px;padding-left:1px;letter-spacing:0'><span style='display:inline-block;transform:scaleX(1.0)'>7447</span></div>
<div class='t' style='left:967px;top:161px;width:29px;height:20px;background:#cdcdcd;border-right:1px solid #c4c4c4;font-size:11px;color:#000;text-align:center;line-height:20px;padding-left:1px;letter-spacing:0'><span style='display:inline-block;transform:scaleX(1.0)'>7635</span></div>
<div class='t' style='left:996px;top:161px;width:29px;height:20px;background:#cdcdcd;border-right:1px solid #c4c4c4;font-size:11px;color:#000;text-align:center;line-height:20px;padding-left:1px;letter-spacing:0'><span style='display:inline-block;transform:scaleX(1.0)'>7883</span></div>
<div class='t' style='left:1025px;top:161px;width:29px;height:20px;background:#cdcdcd;border-right:1px solid #c4c4c4;font-size:11px;color:#000;text-align:center;line-height:20px;padding-left:1px;letter-spacing:0'><span style='display:inline-block;transform:scaleX(1.0)'>8226</span></div>
<div class='t' style='left:1054px;top:161px;width:29px;height:20px;background:#cdcdcd;border-right:1px solid #c4c4c4;font-size:11px;color:#000;text-align:center;line-height:20px;padding-left:1px;letter-spacing:0'><span style='display:inline-block;transform:scaleX(1.0)'>8335</span></div>
<div class='t' style='left:1083px;top:161px;width:29px;height:20px;background:#cdcdcd;border-right:1px solid #c4c4c4;font-size:11px;color:#000;text-align:center;line-height:20px;padding-left:1px;letter-spacing:0'><span style='display:inline-block;transform:scaleX(1.0)'>8561</span></div>
<div class='t' style='left:1112px;top:161px;width:29px;height:20px;background:#cdcdcd;border-right:1px solid #c4c4c4;font-size:11px;color:#000;text-align:center;line-height:20px;padding-left:1px;letter-spacing:0'><span style='display:inline-block;transform:scaleX(1.0)'>8687</span></div>
<div class='t' style='left:1141px;top:161px;width:29px;height:20px;background:#cdcdcd;border-right:1px solid #c4c4c4;font-size:11px;color:#000;text-align:center;line-height:20px;padding-left:1px;letter-spacing:0'><span style='display:inline-block;transform:scaleX(1.0)'>8892</span></div>
<div class='t' style='left:1170px;top:161px;width:29px;height:20px;background:#cdcdcd;border-right:1px solid #c4c4c4;font-size:11px;color:#000;text-align:center;line-height:20px;padding-left:1px;letter-spacing:0'><span style='display:inline-block;transform:scaleX(1.0)'>9033</span></div>
<div class='t' style='left:1199px;top:161px;width:29px;height:20px;background:#cdcdcd;border-right:1px solid #c4c4c4;font-size:11px;color:#000;text-align:center;line-height:20px;padding-left:1px;letter-spacing:0'><span style='display:inline-block;transform:scaleX(1.0)'>10...</span></div>
<div class='a' style='left:319px;top:183px;width:911px;height:23px;background:#fff;border-top:1px solid #a0a0a0;border-left:1px solid #a0a0a0'></div>
<div class='a' style='left:320px;top:184px;width:909px;height:21px;background:#e3e3e3;border-top:1px solid #696969;border-left:1px solid #696969'></div>
<div class='t' style='left:321px;top:185px;width:29px;height:19px;background:#2a7ff0;border-right:1px solid #c0c0c0;font-size:11px;color:#ffff00;text-align:center;line-height:19px;padding-left:1px;letter-spacing:0'><span style='display:inline-block;transform:scaleX(1.03)'>0.03</span></div>
<div class='t' style='left:350px;top:185px;width:29px;height:19px;background:#2a7ff0;border-right:1px solid #c0c0c0;font-size:11px;color:#ffff00;text-align:center;line-height:19px;padding-left:1px;letter-spacing:0'><span style='display:inline-block;transform:scaleX(1.03)'>0.17</span></div>
<div class='t' style='left:379px;top:185px;width:29px;height:19px;background:#2a7ff0;border-right:1px solid #c0c0c0;font-size:11px;color:#ffff00;text-align:center;line-height:19px;padding-left:1px;letter-spacing:0'><span style='display:inline-block;transform:scaleX(1.03)'>0.31</span></div>
<div class='t' style='left:408px;top:185px;width:29px;height:19px;background:#2a7ff0;border-right:1px solid #c0c0c0;font-size:11px;color:#ffff00;text-align:center;line-height:19px;padding-left:1px;letter-spacing:0'><span style='display:inline-block;transform:scaleX(1.03)'>0.41</span></div>
<div class='t' style='left:437px;top:185px;width:29px;height:19px;background:#2a7ff0;border-right:1px solid #c0c0c0;font-size:11px;color:#ffff00;text-align:center;line-height:19px;padding-left:1px;letter-spacing:0'><span style='display:inline-block;transform:scaleX(1.03)'>0.54</span></div>
<div class='t' style='left:466px;top:185px;width:29px;height:19px;background:#2a7ff0;border-right:1px solid #c0c0c0;font-size:11px;color:#ffff00;text-align:center;line-height:19px;padding-left:1px;letter-spacing:0'><span style='display:inline-block;transform:scaleX(1.03)'>0.66</span></div>
<div class='t' style='left:495px;top:185px;width:29px;height:19px;background:#2a7ff0;border-right:1px solid #c0c0c0;font-size:11px;color:#ffff00;text-align:center;line-height:19px;padding-left:1px;letter-spacing:0'><span style='display:inline-block;transform:scaleX(1.03)'>0.76</span></div>
<div class='t' style='left:524px;top:185px;width:29px;height:19px;background:#2a7ff0;border-right:1px solid #c0c0c0;font-size:11px;color:#ffff00;text-align:center;line-height:19px;padding-left:1px;letter-spacing:0'><span style='display:inline-block;transform:scaleX(1.03)'>0.88</span></div>
<div class='t' style='left:553px;top:185px;width:29px;height:19px;background:#2a7ff0;border-right:1px solid #c0c0c0;font-size:11px;color:#ffff00;text-align:center;line-height:19px;padding-left:1px;letter-spacing:0'><span style='display:inline-block;transform:scaleX(1.03)'>1.03</span></div>
<div class='t' style='left:582px;top:185px;width:30px;height:19px;background:#2a7ff0;border-right:1px solid #c0c0c0;font-size:11px;color:#ffff00;text-align:center;line-height:19px;padding-left:1px;letter-spacing:0'><span style='display:inline-block;transform:scaleX(1.03)'>1.17</span></div>
<div class='t' style='left:612px;top:185px;width:30px;height:19px;background:#2a7ff0;border-right:1px solid #c0c0c0;font-size:11px;color:#ffff00;text-align:center;line-height:19px;padding-left:1px;letter-spacing:0'><span style='display:inline-block;transform:scaleX(1.03)'>1.35</span></div>
<div class='t' style='left:642px;top:185px;width:30px;height:19px;background:#2a7ff0;border-right:1px solid #c0c0c0;font-size:11px;color:#ffff00;text-align:center;line-height:19px;padding-left:1px;letter-spacing:0'><span style='display:inline-block;transform:scaleX(1.03)'>1.61</span></div>
<div class='t' style='left:672px;top:185px;width:30px;height:19px;background:#2a7ff0;border-right:1px solid #c0c0c0;font-size:11px;color:#ffff00;text-align:center;line-height:19px;padding-left:1px;letter-spacing:0'><span style='display:inline-block;transform:scaleX(1.03)'>1.76</span></div>
<div class='t' style='left:702px;top:185px;width:30px;height:19px;background:#2a7ff0;border-right:1px solid #c0c0c0;font-size:11px;color:#ffff00;text-align:center;line-height:19px;padding-left:1px;letter-spacing:0'><span style='display:inline-block;transform:scaleX(1.03)'>1.91</span></div>
<div class='t' style='left:732px;top:185px;width:30px;height:19px;background:#2a7ff0;border-right:1px solid #c0c0c0;font-size:11px;color:#ffff00;text-align:center;line-height:19px;padding-left:1px;letter-spacing:0'><span style='display:inline-block;transform:scaleX(1.03)'>2.05</span></div>
<div class='t' style='left:762px;top:185px;width:30px;height:19px;background:#2a7ff0;border-right:1px solid #c0c0c0;font-size:11px;color:#ffff00;text-align:center;line-height:19px;padding-left:1px;letter-spacing:0'><span style='display:inline-block;transform:scaleX(1.03)'>2.20</span></div>
<div class='t' style='left:792px;top:185px;width:30px;height:19px;background:#2a7ff0;border-right:1px solid #c0c0c0;font-size:11px;color:#ffff00;text-align:center;line-height:19px;padding-left:1px;letter-spacing:0'><span style='display:inline-block;transform:scaleX(1.03)'>2.35</span></div>
<div class='t' style='left:822px;top:185px;width:29px;height:19px;background:#2a7ff0;border-right:1px solid #c0c0c0;font-size:11px;color:#ffff00;text-align:center;line-height:19px;padding-left:1px;letter-spacing:0'><span style='display:inline-block;transform:scaleX(1.03)'>2.49</span></div>
<div class='t' style='left:851px;top:185px;width:29px;height:19px;background:#2a7ff0;border-right:1px solid #c0c0c0;font-size:11px;color:#ffff00;text-align:center;line-height:19px;padding-left:1px;letter-spacing:0'><span style='display:inline-block;transform:scaleX(1.03)'>2.64</span></div>
<div class='t' style='left:880px;top:185px;width:29px;height:19px;background:#2a7ff0;border-right:1px solid #c0c0c0;font-size:11px;color:#ffff00;text-align:center;line-height:19px;padding-left:1px;letter-spacing:0'><span style='display:inline-block;transform:scaleX(1.03)'>2.79</span></div>
<div class='t' style='left:909px;top:185px;width:29px;height:19px;background:#2a7ff0;border-right:1px solid #c0c0c0;font-size:11px;color:#ffff00;text-align:center;line-height:19px;padding-left:1px;letter-spacing:0'><span style='display:inline-block;transform:scaleX(1.03)'>2.93</span></div>
<div class='t' style='left:938px;top:185px;width:29px;height:19px;background:#2a7ff0;border-right:1px solid #c0c0c0;font-size:11px;color:#ffff00;text-align:center;line-height:19px;padding-left:1px;letter-spacing:0'><span style='display:inline-block;transform:scaleX(1.03)'>3.08</span></div>
<div class='t' style='left:967px;top:185px;width:29px;height:19px;background:#2a7ff0;border-right:1px solid #c0c0c0;font-size:11px;color:#ffff00;text-align:center;line-height:19px;padding-left:1px;letter-spacing:0'><span style='display:inline-block;transform:scaleX(1.03)'>3.23</span></div>
<div class='t' style='left:996px;top:185px;width:29px;height:19px;background:#2a7ff0;border-right:1px solid #c0c0c0;font-size:11px;color:#ffff00;text-align:center;line-height:19px;padding-left:1px;letter-spacing:0'><span style='display:inline-block;transform:scaleX(1.03)'>3.37</span></div>
<div class='t' style='left:1025px;top:185px;width:29px;height:19px;background:#2a7ff0;border-right:1px solid #c0c0c0;font-size:11px;color:#ffff00;text-align:center;line-height:19px;padding-left:1px;letter-spacing:0'><span style='display:inline-block;transform:scaleX(1.03)'>3.52</span></div>
<div class='t' style='left:1054px;top:185px;width:29px;height:19px;background:#2a7ff0;border-right:1px solid #c0c0c0;font-size:11px;color:#ffff00;text-align:center;line-height:19px;padding-left:1px;letter-spacing:0'><span style='display:inline-block;transform:scaleX(1.03)'>3.67</span></div>
<div class='t' style='left:1083px;top:185px;width:29px;height:19px;background:#2a7ff0;border-right:1px solid #c0c0c0;font-size:11px;color:#ffff00;text-align:center;line-height:19px;padding-left:1px;letter-spacing:0'><span style='display:inline-block;transform:scaleX(1.03)'>3.81</span></div>
<div class='t' style='left:1112px;top:185px;width:29px;height:19px;background:#2a7ff0;border-right:1px solid #c0c0c0;font-size:11px;color:#ffff00;text-align:center;line-height:19px;padding-left:1px;letter-spacing:0'><span style='display:inline-block;transform:scaleX(1.03)'>3.96</span></div>
<div class='t' style='left:1141px;top:185px;width:29px;height:19px;background:#2a7ff0;border-right:1px solid #c0c0c0;font-size:11px;color:#ffff00;text-align:center;line-height:19px;padding-left:1px;letter-spacing:0'><span style='display:inline-block;transform:scaleX(1.03)'>4.11</span></div>
<div class='t' style='left:1170px;top:185px;width:29px;height:19px;background:#2a7ff0;border-right:1px solid #c0c0c0;font-size:11px;color:#ffff00;text-align:center;line-height:19px;padding-left:1px;letter-spacing:0'><span style='display:inline-block;transform:scaleX(1.03)'>4.25</span></div>
<div class='t' style='left:1199px;top:185px;width:29px;height:19px;background:#2a7ff0;border-right:1px solid #c0c0c0;font-size:11px;color:#ffff00;text-align:center;line-height:19px;padding-left:1px;letter-spacing:0'><span style='display:inline-block;transform:scaleX(1.03)'>4.40</span></div>
<div class='t b' style='right:976.4px;top:163px;font-size:12px;color:#ff0000;transform:scaleX(1.105);transform-origin:right top;-webkit-text-stroke:0.25px #ff0000;'>rpm</div>
<div class='t b' style='right:976.4px;top:188px;font-size:12px;color:#fff;transform:scaleX(1.0923);transform-origin:right top;-webkit-text-stroke:0.25px #fff;'>Time</div>
<div class='a' style='left:324px;top:217px;width:13px;height:13px;background:#fff;border:1px solid #3a3a3a'></div><svg class='a' style='left:324px;top:217px' width='13' height='13'><polyline points='2.4,6.3 5,9 10.6,3.3' fill='none' stroke='#3a3a3a' stroke-width='1.6'/></svg>
<div class='t b' style='left:340.8px;top:217px;font-size:12px;color:#ff0000;transform:scaleX(1.0731);transform-origin:left top;-webkit-text-stroke:0.25px #ff0000;'>Edit Rev Limit</div>
<div class='a' style='left:453px;top:217px;width:13px;height:13px;background:#fff;border:1px solid #3a3a3a'></div>
<div class='t b' style='left:470.3px;top:217px;font-size:12px;color:#1010ff;transform:scaleX(1.0808);transform-origin:left top;-webkit-text-stroke:0.25px #1010ff;'>Edit Retard A</div>
<div class='a' style='left:582px;top:217px;width:13px;height:13px;background:#fff;border:1px solid #3a3a3a'></div>
<div class='t b' style='left:599.3px;top:217px;font-size:12px;color:#10f010;transform:scaleX(1.0662);transform-origin:left top;-webkit-text-stroke:0.25px #10f010;'>Edit Retard B</div>
<div class='a' style='left:711px;top:217px;width:13px;height:13px;background:#fff;border:1px solid #3a3a3a'></div>
<div class='t b' style='left:728.1px;top:217px;font-size:12px;color:#1a8a8a;transform:scaleX(1.0827);transform-origin:left top;-webkit-text-stroke:0.25px #1a8a8a;'>Edit Base</div>
<div class='btn' style='left:1044px;top:211px;width:186px;height:24px'></div>
<div class='t b' style='left:1069.2px;top:219px;font-size:11px;color:#000;transform:scaleX(1.1453);transform-origin:left top;-webkit-text-stroke:0.25px #000;'>Offset Editable Curves</div>
<svg class='a' style='left:0;top:0' width='1285' height='834'>
<rect x='325' y='247' width='898' height='402' fill='#c8c8c8'/>
<rect x='1224' y='251' width='2' height='401' fill='#1c1c1c'/>
<rect x='330' y='649' width='894' height='3' fill='#1c1c1c'/>
<rect x='325' y='608' width='898' height='1' fill='#a0a0a0'/>
<rect x='325' y='568' width='898' height='1' fill='#a0a0a0'/>
<rect x='325' y='528' width='898' height='1' fill='#a0a0a0'/>
<rect x='325' y='488' width='898' height='1' fill='#a0a0a0'/>
<rect x='325' y='448' width='898' height='1' fill='#a0a0a0'/>
<rect x='325' y='408' width='898' height='1' fill='#a0a0a0'/>
<rect x='325' y='368' width='898' height='1' fill='#a0a0a0'/>
<rect x='325' y='327' width='898' height='1' fill='#a0a0a0'/>
<rect x='325' y='287' width='898' height='1' fill='#a0a0a0'/>
<rect x='415' y='247' width='1' height='402' fill='#a0a0a0'/>
<rect x='504' y='247' width='1' height='402' fill='#a0a0a0'/>
<rect x='594' y='247' width='1' height='402' fill='#a0a0a0'/>
<rect x='684' y='247' width='1' height='402' fill='#a0a0a0'/>
<rect x='774' y='247' width='1' height='402' fill='#a0a0a0'/>
<rect x='863' y='247' width='1' height='402' fill='#a0a0a0'/>
<rect x='953' y='247' width='1' height='402' fill='#a0a0a0'/>
<rect x='1043' y='247' width='1' height='402' fill='#a0a0a0'/>
<rect x='1132' y='247' width='1' height='402' fill='#a0a0a0'/>
<rect x='315' y='648' width='10' height='1' fill='#e0e0e0'/>
<rect x='315' y='608' width='10' height='1' fill='#e0e0e0'/>
<rect x='315' y='568' width='10' height='1' fill='#e0e0e0'/>
<rect x='315' y='528' width='10' height='1' fill='#e0e0e0'/>
<rect x='315' y='488' width='10' height='1' fill='#e0e0e0'/>
<rect x='315' y='448' width='10' height='1' fill='#e0e0e0'/>
<rect x='315' y='408' width='10' height='1' fill='#e0e0e0'/>
<rect x='315' y='368' width='10' height='1' fill='#e0e0e0'/>
<rect x='315' y='327' width='10' height='1' fill='#e0e0e0'/>
<rect x='315' y='287' width='10' height='1' fill='#e0e0e0'/>
<rect x='315' y='247' width='10' height='1' fill='#e0e0e0'/>
<rect x='325' y='649' width='1' height='10' fill='#e0e0e0'/>
<rect x='415' y='649' width='1' height='10' fill='#e0e0e0'/>
<rect x='504' y='649' width='1' height='10' fill='#e0e0e0'/>
<rect x='594' y='649' width='1' height='10' fill='#e0e0e0'/>
<rect x='684' y='649' width='1' height='10' fill='#e0e0e0'/>
<rect x='774' y='649' width='1' height='10' fill='#e0e0e0'/>
<rect x='863' y='649' width='1' height='10' fill='#e0e0e0'/>
<rect x='953' y='649' width='1' height='10' fill='#e0e0e0'/>
<rect x='1043' y='649' width='1' height='10' fill='#e0e0e0'/>
<rect x='1132' y='649' width='1' height='10' fill='#e0e0e0'/>
<rect x='1222' y='649' width='1' height='10' fill='#e0e0e0'/>
<svg x='325' y='245' width='899' height='404' overflow='hidden'><g transform='translate(-325,-245)'>
<polyline points='325.0,648.5 330.0,647.5 355.6,646.8 386.5,638.7 480.0,594.8 620.0,529.0 684.6,496.6 740.9,474.0 774.5,458.8 805.0,448.4 861.5,423.3 894.0,417.0 923.0,404.0 953.6,394.2 1014.0,375.8 1043.4,362.0 1072.2,357.6 1105.8,348.0 1133.0,344.1 1164.0,335.4 1222.0,324.3' fill='none' stroke='#1a8c8c' stroke-width='1.3' stroke-linejoin='round'/>
<polyline points='325.0,628.4 355.6,627.0 385.8,618.6 480.0,575.2 564.3,535.5 620.0,516.8 653.6,501.7 684.6,492.4 740.9,470.6 774.5,453.0 805.3,444.2 861.5,420.4 894.2,412.3 930.0,398.0 953.6,389.2 987.2,379.1 1014.0,367.4 1043.4,359.0 1079.4,351.8 1108.6,342.8 1138.8,337.4 1167.4,328.1 1192.6,324.8 1222.5,248.0' fill='none' stroke='#2020ff' stroke-width='1.3' stroke-linejoin='round'/>
<polyline points='325.0,621.3 355.6,619.9 387.2,610.5 480.0,568.2 564.3,528.5 594.8,519.1 630.0,505.1 720.7,472.3 774.0,447.1 810.3,435.8 863.5,414.0 894.2,404.0 923.6,391.4 953.6,381.7 1017.4,359.8 1043.4,353.3 1079.4,345.1 1112.5,332.4 1140.5,329.8 1167.4,323.1 1192.6,313.0 1222.5,247.5' fill='none' stroke='#20e020' stroke-width='1.3' stroke-linejoin='round'/>
<polyline points='331.1,613.5 359.7,607.4 388.2,596.5 408.6,586.5 435.1,577.5 459.5,566.5 479.9,558.5 504.4,545.5 535.0,530.5 563.5,518.5 600.2,500.5 653.2,471.3 683.8,457.0 714.4,445.5 742.9,433.3 773.5,419.4 804.1,409.0 832.6,396.2 863.2,383.3 893.8,377.1 922.3,364.0 952.9,353.4 983.5,345.9 1012.0,336.0 1042.6,322.3 1073.2,318.0 1101.7,309.0 1132.3,304.0 1162.9,295.8 1191.4,290.2 1222.0,248.4' fill='none' stroke='#ff2020' stroke-width='1.3' stroke-linejoin='round'/>
<circle cx='331.1' cy='613.5' r='2.1' fill='#f05050' stroke='#100000' stroke-width='1.2'/>
<circle cx='359.7' cy='607.4' r='2.1' fill='#f05050' stroke='#100000' stroke-width='1.2'/>
<circle cx='388.2' cy='596.5' r='2.1' fill='#f05050' stroke='#100000' stroke-width='1.2'/>
<circle cx='408.6' cy='586.5' r='2.1' fill='#f05050' stroke='#100000' stroke-width='1.2'/>
<circle cx='435.1' cy='577.5' r='2.1' fill='#f05050' stroke='#100000' stroke-width='1.2'/>
<circle cx='459.5' cy='566.5' r='2.1' fill='#f05050' stroke='#100000' stroke-width='1.2'/>
<circle cx='479.9' cy='558.5' r='2.1' fill='#f05050' stroke='#100000' stroke-width='1.2'/>
<circle cx='504.4' cy='545.5' r='2.1' fill='#f05050' stroke='#100000' stroke-width='1.2'/>
<circle cx='535.0' cy='530.5' r='2.1' fill='#f05050' stroke='#100000' stroke-width='1.2'/>
<circle cx='563.5' cy='518.5' r='2.1' fill='#f05050' stroke='#100000' stroke-width='1.2'/>
<circle cx='600.2' cy='500.5' r='2.1' fill='#f05050' stroke='#100000' stroke-width='1.2'/>
<circle cx='653.2' cy='471.3' r='2.1' fill='#f05050' stroke='#100000' stroke-width='1.2'/>
<circle cx='683.8' cy='457.0' r='2.1' fill='#f05050' stroke='#100000' stroke-width='1.2'/>
<circle cx='714.4' cy='445.5' r='2.1' fill='#f05050' stroke='#100000' stroke-width='1.2'/>
<circle cx='742.9' cy='433.3' r='2.1' fill='#f05050' stroke='#100000' stroke-width='1.2'/>
<circle cx='773.5' cy='419.4' r='2.1' fill='#f05050' stroke='#100000' stroke-width='1.2'/>
<circle cx='804.1' cy='409.0' r='2.1' fill='#f05050' stroke='#100000' stroke-width='1.2'/>
<circle cx='832.6' cy='396.2' r='2.1' fill='#f05050' stroke='#100000' stroke-width='1.2'/>
<circle cx='863.2' cy='383.3' r='2.1' fill='#f05050' stroke='#100000' stroke-width='1.2'/>
<circle cx='893.8' cy='377.1' r='2.1' fill='#f05050' stroke='#100000' stroke-width='1.2'/>
<circle cx='922.3' cy='364.0' r='2.1' fill='#f05050' stroke='#100000' stroke-width='1.2'/>
<circle cx='952.9' cy='353.4' r='2.1' fill='#f05050' stroke='#100000' stroke-width='1.2'/>
<circle cx='983.5' cy='345.9' r='2.1' fill='#f05050' stroke='#100000' stroke-width='1.2'/>
<circle cx='1012.0' cy='336.0' r='2.1' fill='#f05050' stroke='#100000' stroke-width='1.2'/>
<circle cx='1042.6' cy='322.3' r='2.1' fill='#f05050' stroke='#100000' stroke-width='1.2'/>
<circle cx='1073.2' cy='318.0' r='2.1' fill='#f05050' stroke='#100000' stroke-width='1.2'/>
<circle cx='1101.7' cy='309.0' r='2.1' fill='#f05050' stroke='#100000' stroke-width='1.2'/>
<circle cx='1132.3' cy='304.0' r='2.1' fill='#f05050' stroke='#100000' stroke-width='1.2'/>
<circle cx='1162.9' cy='295.8' r='2.1' fill='#f05050' stroke='#100000' stroke-width='1.2'/>
<circle cx='1191.4' cy='290.2' r='2.1' fill='#f05050' stroke='#100000' stroke-width='1.2'/>
<circle cx='1222.0' cy='248.4' r='2.1' fill='#f05050' stroke='#100000' stroke-width='1.2'/>
</g></svg>
</svg>
<div class='t b' style='right:972px;top:641px;font-size:12px;color:#fff;transform:scaleX(1.05);transform-origin:right top;-webkit-text-stroke:0.2px #fff'>0</div>
<div class='t b' style='right:972px;top:601px;font-size:12px;color:#fff;transform:scaleX(1.05);transform-origin:right top;-webkit-text-stroke:0.2px #fff'>1</div>
<div class='t b' style='right:972px;top:561px;font-size:12px;color:#fff;transform:scaleX(1.05);transform-origin:right top;-webkit-text-stroke:0.2px #fff'>2</div>
<div class='t b' style='right:972px;top:521px;font-size:12px;color:#fff;transform:scaleX(1.05);transform-origin:right top;-webkit-text-stroke:0.2px #fff'>3</div>
<div class='t b' style='right:972px;top:481px;font-size:12px;color:#fff;transform:scaleX(1.05);transform-origin:right top;-webkit-text-stroke:0.2px #fff'>4</div>
<div class='t b' style='right:972px;top:440px;font-size:12px;color:#fff;transform:scaleX(1.05);transform-origin:right top;-webkit-text-stroke:0.2px #fff'>5</div>
<div class='t b' style='right:972px;top:400px;font-size:12px;color:#fff;transform:scaleX(1.05);transform-origin:right top;-webkit-text-stroke:0.2px #fff'>6</div>
<div class='t b' style='right:972px;top:360px;font-size:12px;color:#fff;transform:scaleX(1.05);transform-origin:right top;-webkit-text-stroke:0.2px #fff'>7</div>
<div class='t b' style='right:972px;top:320px;font-size:12px;color:#fff;transform:scaleX(1.05);transform-origin:right top;-webkit-text-stroke:0.2px #fff'>8</div>
<div class='t b' style='right:972px;top:280px;font-size:12px;color:#fff;transform:scaleX(1.05);transform-origin:right top;-webkit-text-stroke:0.2px #fff'>9</div>
<div class='t b' style='right:972px;top:240px;font-size:12px;color:#fff;transform:scaleX(1.05);transform-origin:right top;-webkit-text-stroke:0.2px #fff'>10</div>
<div class='t b' style='left:295.0px;width:60px;text-align:center;top:662px;font-size:13px;color:#fff;transform:scaleX(1.2);-webkit-text-stroke:0.25px #fff'>0.0</div>
<div class='t b' style='left:384.7px;width:60px;text-align:center;top:662px;font-size:13px;color:#fff;transform:scaleX(1.2);-webkit-text-stroke:0.25px #fff'>0.4</div>
<div class='t b' style='left:474.4px;width:60px;text-align:center;top:662px;font-size:13px;color:#fff;transform:scaleX(1.2);-webkit-text-stroke:0.25px #fff'>0.9</div>
<div class='t b' style='left:564.1px;width:60px;text-align:center;top:662px;font-size:13px;color:#fff;transform:scaleX(1.2);-webkit-text-stroke:0.25px #fff'>1.3</div>
<div class='t b' style='left:653.8px;width:60px;text-align:center;top:662px;font-size:13px;color:#fff;transform:scaleX(1.2);-webkit-text-stroke:0.25px #fff'>1.8</div>
<div class='t b' style='left:743.5px;width:60px;text-align:center;top:662px;font-size:13px;color:#fff;transform:scaleX(1.2);-webkit-text-stroke:0.25px #fff'>2.2</div>
<div class='t b' style='left:833.2px;width:60px;text-align:center;top:662px;font-size:13px;color:#fff;transform:scaleX(1.2);-webkit-text-stroke:0.25px #fff'>2.6</div>
<div class='t b' style='left:922.9px;width:60px;text-align:center;top:662px;font-size:13px;color:#fff;transform:scaleX(1.2);-webkit-text-stroke:0.25px #fff'>3.1</div>
<div class='t b' style='left:1012.6px;width:60px;text-align:center;top:662px;font-size:13px;color:#fff;transform:scaleX(1.2);-webkit-text-stroke:0.25px #fff'>3.5</div>
<div class='t b' style='left:1102.3px;width:60px;text-align:center;top:662px;font-size:13px;color:#fff;transform:scaleX(1.2);-webkit-text-stroke:0.25px #fff'>4.0</div>
<div class='t b' style='left:1192.0px;width:60px;text-align:center;top:662px;font-size:13px;color:#fff;transform:scaleX(1.2);-webkit-text-stroke:0.25px #fff'>4.4</div>
<div class='t b' style='left:683.9px;top:676px;font-size:13px;color:#fff;transform:scaleX(1.207);transform-origin:left top;-webkit-text-stroke:0.25px #fff'>Time From Launch (sec)</div>
<div class='t b' style='left:265px;top:463.75px;width:0;height:0'><div class='t b' style='left:-68.3px;top:-6.5px;font-size:13px;color:#fff;transform:rotate(-90deg) scaleX(1.229);transform-origin:68.3px 6.5px;-webkit-text-stroke:0.25px #fff'>Driveshaft (rpmx1000)</div></div>
<div class='t b' style='left:330.5px;top:745px;font-size:11px;color:#fff;transform:scaleX(1.185);transform-origin:left top;-webkit-text-stroke:0.25px #fff;'>Select Table to Edit</div>
<div class='a' style='left:457px;top:739px;width:113px;height:21px;background:#e5e5e5;border:1px solid #adadad'></div>
<div class='t' style='left:461px;top:744px;font-size:12px;color:#000;letter-spacing:-0.5px;'>Retard A</div>
<svg class='a' style='left:556px;top:746px' width='10' height='8'><polyline points='0.5,1 4.5,5 8.5,1' fill='none' stroke='#333' stroke-width='1.2'/></svg>
<div class='a' style='left:319px;top:765px;width:911px;height:24px;background:#fff;border-top:1px solid #a0a0a0;border-left:1px solid #a0a0a0'></div>
<div class='a' style='left:320px;top:766px;width:909px;height:22px;background:#e3e3e3;border-top:1px solid #696969;border-left:1px solid #696969'></div>
<div class='t' style='left:321px;top:767px;width:29px;height:20px;background:#cdcdcd;border-right:1px solid #c4c4c4;font-size:11px;color:#000;text-align:center;line-height:20px;padding-left:1px;letter-spacing:0'><span style='display:inline-block;transform:scaleX(1.0)'>0.0</span></div>
<div class='t' style='left:350px;top:767px;width:29px;height:20px;background:#cdcdcd;border-right:1px solid #c4c4c4;font-size:11px;color:#000;text-align:center;line-height:20px;padding-left:1px;letter-spacing:0'><span style='display:inline-block;transform:scaleX(1.0)'>-2.0</span></div>
<div class='t' style='left:379px;top:767px;width:29px;height:20px;background:#cdcdcd;border-right:1px solid #c4c4c4;font-size:11px;color:#000;text-align:center;line-height:20px;padding-left:1px;letter-spacing:0'><span style='display:inline-block;transform:scaleX(1.0)'>-2.0</span></div>
<div class='t' style='left:408px;top:767px;width:29px;height:20px;background:#cdcdcd;border-right:1px solid #c4c4c4;font-size:11px;color:#000;text-align:center;line-height:20px;padding-left:1px;letter-spacing:0'><span style='display:inline-block;transform:scaleX(1.0)'>-2.0</span></div>
<div class='t' style='left:437px;top:767px;width:29px;height:20px;background:#cdcdcd;border-right:1px solid #c4c4c4;font-size:11px;color:#000;text-align:center;line-height:20px;padding-left:1px;letter-spacing:0'><span style='display:inline-block;transform:scaleX(1.0)'>-2.0</span></div>
<div class='t' style='left:466px;top:767px;width:29px;height:20px;background:#cdcdcd;border-right:1px solid #c4c4c4;font-size:11px;color:#000;text-align:center;line-height:20px;padding-left:1px;letter-spacing:0'><span style='display:inline-block;transform:scaleX(1.0)'>-2.0</span></div>
<div class='t' style='left:495px;top:767px;width:29px;height:20px;background:#cdcdcd;border-right:1px solid #c4c4c4;font-size:11px;color:#000;text-align:center;line-height:20px;padding-left:1px;letter-spacing:0'><span style='display:inline-block;transform:scaleX(1.0)'>-2.0</span></div>
<div class='t' style='left:524px;top:767px;width:29px;height:20px;background:#cdcdcd;border-right:1px solid #c4c4c4;font-size:11px;color:#000;text-align:center;line-height:20px;padding-left:1px;letter-spacing:0'><span style='display:inline-block;transform:scaleX(1.0)'>-2.0</span></div>
<div class='t' style='left:553px;top:767px;width:29px;height:20px;background:#cdcdcd;border-right:1px solid #c4c4c4;font-size:11px;color:#000;text-align:center;line-height:20px;padding-left:1px;letter-spacing:0'><span style='display:inline-block;transform:scaleX(1.0)'>-2.0</span></div>
<div class='t' style='left:582px;top:767px;width:30px;height:20px;background:#cdcdcd;border-right:1px solid #c4c4c4;font-size:11px;color:#000;text-align:center;line-height:20px;padding-left:1px;letter-spacing:0'><span style='display:inline-block;transform:scaleX(1.0)'>-2.0</span></div>
<div class='t' style='left:612px;top:767px;width:30px;height:20px;background:#cdcdcd;border-right:1px solid #c4c4c4;font-size:11px;color:#000;text-align:center;line-height:20px;padding-left:1px;letter-spacing:0'><span style='display:inline-block;transform:scaleX(1.0)'>-2.0</span></div>
<div class='t' style='left:642px;top:767px;width:30px;height:20px;background:#cdcdcd;border-right:1px solid #c4c4c4;font-size:11px;color:#000;text-align:center;line-height:20px;padding-left:1px;letter-spacing:0'><span style='display:inline-block;transform:scaleX(1.0)'>-2.0</span></div>
<div class='t' style='left:672px;top:767px;width:30px;height:20px;background:#cdcdcd;border-right:1px solid #c4c4c4;font-size:11px;color:#000;text-align:center;line-height:20px;padding-left:1px;letter-spacing:0'><span style='display:inline-block;transform:scaleX(1.0)'>-2.0</span></div>
<div class='t' style='left:702px;top:767px;width:30px;height:20px;background:#cdcdcd;border-right:1px solid #c4c4c4;font-size:11px;color:#000;text-align:center;line-height:20px;padding-left:1px;letter-spacing:0'><span style='display:inline-block;transform:scaleX(1.0)'>-2.0</span></div>
<div class='t' style='left:732px;top:767px;width:30px;height:20px;background:#cdcdcd;border-right:1px solid #c4c4c4;font-size:11px;color:#000;text-align:center;line-height:20px;padding-left:1px;letter-spacing:0'><span style='display:inline-block;transform:scaleX(1.0)'>-2.0</span></div>
<div class='t' style='left:762px;top:767px;width:30px;height:20px;background:#cdcdcd;border-right:1px solid #c4c4c4;font-size:11px;color:#000;text-align:center;line-height:20px;padding-left:1px;letter-spacing:0'><span style='display:inline-block;transform:scaleX(1.0)'>-2.0</span></div>
<div class='t' style='left:792px;top:767px;width:30px;height:20px;background:#cdcdcd;border-right:1px solid #c4c4c4;font-size:11px;color:#000;text-align:center;line-height:20px;padding-left:1px;letter-spacing:0'><span style='display:inline-block;transform:scaleX(1.0)'>-2.0</span></div>
<div class='t' style='left:822px;top:767px;width:29px;height:20px;background:#cdcdcd;border-right:1px solid #c4c4c4;font-size:11px;color:#000;text-align:center;line-height:20px;padding-left:1px;letter-spacing:0'><span style='display:inline-block;transform:scaleX(1.0)'>-1.0</span></div>
<div class='t' style='left:851px;top:767px;width:29px;height:20px;background:#cdcdcd;border-right:1px solid #c4c4c4;font-size:11px;color:#000;text-align:center;line-height:20px;padding-left:1px;letter-spacing:0'><span style='display:inline-block;transform:scaleX(1.0)'>-1.0</span></div>
<div class='t' style='left:880px;top:767px;width:29px;height:20px;background:#cdcdcd;border-right:1px solid #c4c4c4;font-size:11px;color:#000;text-align:center;line-height:20px;padding-left:1px;letter-spacing:0'><span style='display:inline-block;transform:scaleX(1.0)'>-1.0</span></div>
<div class='t' style='left:909px;top:767px;width:29px;height:20px;background:#cdcdcd;border-right:1px solid #c4c4c4;font-size:11px;color:#000;text-align:center;line-height:20px;padding-left:1px;letter-spacing:0'><span style='display:inline-block;transform:scaleX(1.0)'>-1.0</span></div>
<div class='t' style='left:938px;top:767px;width:29px;height:20px;background:#cdcdcd;border-right:1px solid #c4c4c4;font-size:11px;color:#000;text-align:center;line-height:20px;padding-left:1px;letter-spacing:0'><span style='display:inline-block;transform:scaleX(1.0)'>-1.0</span></div>
<div class='t' style='left:967px;top:767px;width:29px;height:20px;background:#cdcdcd;border-right:1px solid #c4c4c4;font-size:11px;color:#000;text-align:center;line-height:20px;padding-left:1px;letter-spacing:0'><span style='display:inline-block;transform:scaleX(1.0)'>-1.0</span></div>
<div class='t' style='left:996px;top:767px;width:29px;height:20px;background:#cdcdcd;border-right:1px solid #c4c4c4;font-size:11px;color:#000;text-align:center;line-height:20px;padding-left:1px;letter-spacing:0'><span style='display:inline-block;transform:scaleX(1.0)'>-1.0</span></div>
<div class='t' style='left:1025px;top:767px;width:29px;height:20px;background:#cdcdcd;border-right:1px solid #c4c4c4;font-size:11px;color:#000;text-align:center;line-height:20px;padding-left:1px;letter-spacing:0'><span style='display:inline-block;transform:scaleX(1.0)'>-1.0</span></div>
<div class='t' style='left:1054px;top:767px;width:29px;height:20px;background:#cdcdcd;border-right:1px solid #c4c4c4;font-size:11px;color:#000;text-align:center;line-height:20px;padding-left:1px;letter-spacing:0'><span style='display:inline-block;transform:scaleX(1.0)'>-1.0</span></div>
<div class='t' style='left:1083px;top:767px;width:29px;height:20px;background:#cdcdcd;border-right:1px solid #c4c4c4;font-size:11px;color:#000;text-align:center;line-height:20px;padding-left:1px;letter-spacing:0'><span style='display:inline-block;transform:scaleX(1.0)'>-1.0</span></div>
<div class='t' style='left:1112px;top:767px;width:29px;height:20px;background:#cdcdcd;border-right:1px solid #c4c4c4;font-size:11px;color:#000;text-align:center;line-height:20px;padding-left:1px;letter-spacing:0'><span style='display:inline-block;transform:scaleX(1.0)'>-1.0</span></div>
<div class='t' style='left:1141px;top:767px;width:29px;height:20px;background:#cdcdcd;border-right:1px solid #c4c4c4;font-size:11px;color:#000;text-align:center;line-height:20px;padding-left:1px;letter-spacing:0'><span style='display:inline-block;transform:scaleX(1.0)'>-1.0</span></div>
<div class='t' style='left:1170px;top:767px;width:29px;height:20px;background:#cdcdcd;border-right:1px solid #c4c4c4;font-size:11px;color:#000;text-align:center;line-height:20px;padding-left:1px;letter-spacing:0'><span style='display:inline-block;transform:scaleX(1.0)'>-1.0</span></div>
<div class='t' style='left:1199px;top:767px;width:29px;height:20px;background:#cdcdcd;border-right:1px solid #c4c4c4;font-size:11px;color:#000;text-align:center;line-height:20px;padding-left:1px;letter-spacing:0'><span style='display:inline-block;transform:scaleX(1.0)'>-1.0</span></div>
<div class='a' style='left:319px;top:789px;width:911px;height:23px;background:#fff;border-top:1px solid #a0a0a0;border-left:1px solid #a0a0a0'></div>
<div class='a' style='left:320px;top:790px;width:909px;height:21px;background:#e3e3e3;border-top:1px solid #696969;border-left:1px solid #696969'></div>
<div class='t' style='left:321px;top:791px;width:29px;height:19px;background:#2a7ff0;border-right:1px solid #c0c0c0;font-size:11px;color:#ffff00;text-align:center;line-height:19px;padding-left:1px;letter-spacing:0'><span style='display:inline-block;transform:scaleX(1.03)'>0.00</span></div>
<div class='t' style='left:350px;top:791px;width:29px;height:19px;background:#2a7ff0;border-right:1px solid #c0c0c0;font-size:11px;color:#ffff00;text-align:center;line-height:19px;padding-left:1px;letter-spacing:0'><span style='display:inline-block;transform:scaleX(1.03)'>0.15</span></div>
<div class='t' style='left:379px;top:791px;width:29px;height:19px;background:#2a7ff0;border-right:1px solid #c0c0c0;font-size:11px;color:#ffff00;text-align:center;line-height:19px;padding-left:1px;letter-spacing:0'><span style='display:inline-block;transform:scaleX(1.03)'>0.29</span></div>
<div class='t' style='left:408px;top:791px;width:29px;height:19px;background:#2a7ff0;border-right:1px solid #c0c0c0;font-size:11px;color:#ffff00;text-align:center;line-height:19px;padding-left:1px;letter-spacing:0'><span style='display:inline-block;transform:scaleX(1.03)'>0.44</span></div>
<div class='t' style='left:437px;top:791px;width:29px;height:19px;background:#2a7ff0;border-right:1px solid #c0c0c0;font-size:11px;color:#ffff00;text-align:center;line-height:19px;padding-left:1px;letter-spacing:0'><span style='display:inline-block;transform:scaleX(1.03)'>0.59</span></div>
<div class='t' style='left:466px;top:791px;width:29px;height:19px;background:#2a7ff0;border-right:1px solid #c0c0c0;font-size:11px;color:#ffff00;text-align:center;line-height:19px;padding-left:1px;letter-spacing:0'><span style='display:inline-block;transform:scaleX(1.03)'>0.73</span></div>
<div class='t' style='left:495px;top:791px;width:29px;height:19px;background:#2a7ff0;border-right:1px solid #c0c0c0;font-size:11px;color:#ffff00;text-align:center;line-height:19px;padding-left:1px;letter-spacing:0'><span style='display:inline-block;transform:scaleX(1.03)'>0.88</span></div>
<div class='t' style='left:524px;top:791px;width:29px;height:19px;background:#2a7ff0;border-right:1px solid #c0c0c0;font-size:11px;color:#ffff00;text-align:center;line-height:19px;padding-left:1px;letter-spacing:0'><span style='display:inline-block;transform:scaleX(1.03)'>1.03</span></div>
<div class='t' style='left:553px;top:791px;width:29px;height:19px;background:#2a7ff0;border-right:1px solid #c0c0c0;font-size:11px;color:#ffff00;text-align:center;line-height:19px;padding-left:1px;letter-spacing:0'><span style='display:inline-block;transform:scaleX(1.03)'>1.17</span></div>
<div class='t' style='left:582px;top:791px;width:30px;height:19px;background:#2a7ff0;border-right:1px solid #c0c0c0;font-size:11px;color:#ffff00;text-align:center;line-height:19px;padding-left:1px;letter-spacing:0'><span style='display:inline-block;transform:scaleX(1.03)'>1.32</span></div>
<div class='t' style='left:612px;top:791px;width:30px;height:19px;background:#2a7ff0;border-right:1px solid #c0c0c0;font-size:11px;color:#ffff00;text-align:center;line-height:19px;padding-left:1px;letter-spacing:0'><span style='display:inline-block;transform:scaleX(1.03)'>1.47</span></div>
<div class='t' style='left:642px;top:791px;width:30px;height:19px;background:#2a7ff0;border-right:1px solid #c0c0c0;font-size:11px;color:#ffff00;text-align:center;line-height:19px;padding-left:1px;letter-spacing:0'><span style='display:inline-block;transform:scaleX(1.03)'>1.61</span></div>
<div class='t' style='left:672px;top:791px;width:30px;height:19px;background:#2a7ff0;border-right:1px solid #c0c0c0;font-size:11px;color:#ffff00;text-align:center;line-height:19px;padding-left:1px;letter-spacing:0'><span style='display:inline-block;transform:scaleX(1.03)'>1.76</span></div>
<div class='t' style='left:702px;top:791px;width:30px;height:19px;background:#2a7ff0;border-right:1px solid #c0c0c0;font-size:11px;color:#ffff00;text-align:center;line-height:19px;padding-left:1px;letter-spacing:0'><span style='display:inline-block;transform:scaleX(1.03)'>1.91</span></div>
<div class='t' style='left:732px;top:791px;width:30px;height:19px;background:#2a7ff0;border-right:1px solid #c0c0c0;font-size:11px;color:#ffff00;text-align:center;line-height:19px;padding-left:1px;letter-spacing:0'><span style='display:inline-block;transform:scaleX(1.03)'>2.05</span></div>
<div class='t' style='left:762px;top:791px;width:30px;height:19px;background:#2a7ff0;border-right:1px solid #c0c0c0;font-size:11px;color:#ffff00;text-align:center;line-height:19px;padding-left:1px;letter-spacing:0'><span style='display:inline-block;transform:scaleX(1.03)'>2.20</span></div>
<div class='t' style='left:792px;top:791px;width:30px;height:19px;background:#2a7ff0;border-right:1px solid #c0c0c0;font-size:11px;color:#ffff00;text-align:center;line-height:19px;padding-left:1px;letter-spacing:0'><span style='display:inline-block;transform:scaleX(1.03)'>2.35</span></div>
<div class='t' style='left:822px;top:791px;width:29px;height:19px;background:#2a7ff0;border-right:1px solid #c0c0c0;font-size:11px;color:#ffff00;text-align:center;line-height:19px;padding-left:1px;letter-spacing:0'><span style='display:inline-block;transform:scaleX(1.03)'>2.49</span></div>
<div class='t' style='left:851px;top:791px;width:29px;height:19px;background:#2a7ff0;border-right:1px solid #c0c0c0;font-size:11px;color:#ffff00;text-align:center;line-height:19px;padding-left:1px;letter-spacing:0'><span style='display:inline-block;transform:scaleX(1.03)'>2.64</span></div>
<div class='t' style='left:880px;top:791px;width:29px;height:19px;background:#2a7ff0;border-right:1px solid #c0c0c0;font-size:11px;color:#ffff00;text-align:center;line-height:19px;padding-left:1px;letter-spacing:0'><span style='display:inline-block;transform:scaleX(1.03)'>2.79</span></div>
<div class='t' style='left:909px;top:791px;width:29px;height:19px;background:#2a7ff0;border-right:1px solid #c0c0c0;font-size:11px;color:#ffff00;text-align:center;line-height:19px;padding-left:1px;letter-spacing:0'><span style='display:inline-block;transform:scaleX(1.03)'>2.93</span></div>
<div class='t' style='left:938px;top:791px;width:29px;height:19px;background:#2a7ff0;border-right:1px solid #c0c0c0;font-size:11px;color:#ffff00;text-align:center;line-height:19px;padding-left:1px;letter-spacing:0'><span style='display:inline-block;transform:scaleX(1.03)'>3.08</span></div>
<div class='t' style='left:967px;top:791px;width:29px;height:19px;background:#2a7ff0;border-right:1px solid #c0c0c0;font-size:11px;color:#ffff00;text-align:center;line-height:19px;padding-left:1px;letter-spacing:0'><span style='display:inline-block;transform:scaleX(1.03)'>3.23</span></div>
<div class='t' style='left:996px;top:791px;width:29px;height:19px;background:#2a7ff0;border-right:1px solid #c0c0c0;font-size:11px;color:#ffff00;text-align:center;line-height:19px;padding-left:1px;letter-spacing:0'><span style='display:inline-block;transform:scaleX(1.03)'>3.37</span></div>
<div class='t' style='left:1025px;top:791px;width:29px;height:19px;background:#2a7ff0;border-right:1px solid #c0c0c0;font-size:11px;color:#ffff00;text-align:center;line-height:19px;padding-left:1px;letter-spacing:0'><span style='display:inline-block;transform:scaleX(1.03)'>3.52</span></div>
<div class='t' style='left:1054px;top:791px;width:29px;height:19px;background:#2a7ff0;border-right:1px solid #c0c0c0;font-size:11px;color:#ffff00;text-align:center;line-height:19px;padding-left:1px;letter-spacing:0'><span style='display:inline-block;transform:scaleX(1.03)'>3.67</span></div>
<div class='t' style='left:1083px;top:791px;width:29px;height:19px;background:#2a7ff0;border-right:1px solid #c0c0c0;font-size:11px;color:#ffff00;text-align:center;line-height:19px;padding-left:1px;letter-spacing:0'><span style='display:inline-block;transform:scaleX(1.03)'>3.81</span></div>
<div class='t' style='left:1112px;top:791px;width:29px;height:19px;background:#2a7ff0;border-right:1px solid #c0c0c0;font-size:11px;color:#ffff00;text-align:center;line-height:19px;padding-left:1px;letter-spacing:0'><span style='display:inline-block;transform:scaleX(1.03)'>3.96</span></div>
<div class='t' style='left:1141px;top:791px;width:29px;height:19px;background:#2a7ff0;border-right:1px solid #c0c0c0;font-size:11px;color:#ffff00;text-align:center;line-height:19px;padding-left:1px;letter-spacing:0'><span style='display:inline-block;transform:scaleX(1.03)'>4.11</span></div>
<div class='t' style='left:1170px;top:791px;width:29px;height:19px;background:#2a7ff0;border-right:1px solid #c0c0c0;font-size:11px;color:#ffff00;text-align:center;line-height:19px;padding-left:1px;letter-spacing:0'><span style='display:inline-block;transform:scaleX(1.03)'>4.25</span></div>
<div class='t' style='left:1199px;top:791px;width:29px;height:19px;background:#2a7ff0;border-right:1px solid #c0c0c0;font-size:11px;color:#ffff00;text-align:center;line-height:19px;padding-left:1px;letter-spacing:0'><span style='display:inline-block;transform:scaleX(1.03)'>4.40</span></div>
<div class='t b' style='right:976.6px;top:769px;font-size:12px;color:#1010ff;transform:scaleX(1.0474);transform-origin:right top;-webkit-text-stroke:0.25px #1010ff;'>Timing</div>
<div class='t b' style='right:976.4px;top:793px;font-size:12px;color:#fff;transform:scaleX(1.0923);transform-origin:right top;-webkit-text-stroke:0.25px #fff;'>Time</div>
<div class='a' style='left:241px;top:818px;width:1024px;height:1px;background:#fff'></div>
<div class='a' style='left:241px;top:819px;width:1024px;height:14px;background:#f0f0f0'></div>
<div class='a' style='left:258px;top:819px;width:975px;height:13px;background:#cdcdcd'></div>
<svg class='a' style='left:0;top:0' width='1285' height='834'><polyline points='252.0,822.5 248.0,826 252.0,829.5' fill='none' stroke='#606060' stroke-width='2'/><polyline points='1254.0,822.5 1258.0,826 1254.0,829.5' fill='none' stroke='#606060' stroke-width='2'/></svg>
<div class='a' style='left:0;top:833px;width:1285px;height:1px;background:#000'></div>
</body></html>
